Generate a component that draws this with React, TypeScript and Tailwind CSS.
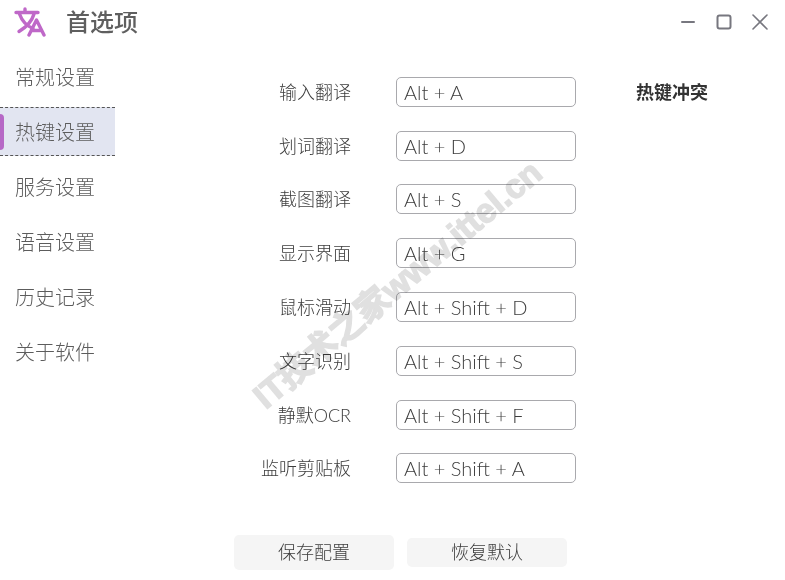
import * as React from 'react';

const menu = ['常规设置', '热键设置', '服务设置', '语音设置', '历史记录', '关于软件'];

const hotkeys = [
	['输入翻译', 'Alt + A'],
	['划词翻译', 'Alt + D'],
	['截图翻译', 'Alt + S'],
	['显示界面', 'Alt + G'],
	['鼠标滑动', 'Alt + Shift + D'],
	['文字识别', 'Alt + Shift + S'],
	['静默OCR', 'Alt + Shift + F'],
	['监听剪贴板', 'Alt + Shift + A'],
];

const App: React.FC = () => {
	return (
		<div className="relative flex h-[580px] w-[785px] flex-col overflow-hidden bg-white font-['Lato','Noto_Sans_CJK_SC',sans-serif] text-[#3c3c3c]">
			<header className="flex h-[47px] items-center pb-[4px] pl-[14px] pr-[17px]">
				<svg width="32" height="30" viewBox="0 0 32 30" fill="none" stroke="#bf68c8" strokeWidth="3.4" strokeLinecap="round" strokeLinejoin="round">
					<path d="M2 5.5H24M11 2V5.5M5.5 7C8 14 13 19 19 21.5M20 7C18 14 12.5 20 5 24.5" />
					<path d="M15 28L22.5 13L30 28M18.5 23.5H26.5" />
				</svg>
				<h1 className="ml-[20px] text-[24px] font-medium text-[#5f5f5f]">首选项</h1>
				<div className="ml-auto flex items-center gap-[20px]">
					<svg width="16" height="16" viewBox="0 0 16 16" fill="none" stroke="#77777f" strokeWidth="2" strokeLinecap="round">
						<path d="M2 8H14" />
					</svg>
					<svg width="16" height="16" viewBox="0 0 16 16" fill="none" stroke="#77777f" strokeWidth="2">
						<rect x="1.5" y="1.5" width="13" height="13" rx="2" />
					</svg>
					<svg width="16" height="16" viewBox="0 0 16 16" fill="none" stroke="#77777f" strokeWidth="1.6" strokeLinecap="round">
						<path d="M1 1L15 15M15 1L1 15" />
					</svg>
				</div>
			</header>

			<div className="flex flex-1">
				<nav className="flex w-[115px] shrink-0 flex-col pt-[2px] text-[20px] font-light text-[#5c5c5c]">
					{menu.map((item) =>
						item === '热键设置' ? (
							<div key={item} className="my-[3px] flex h-[49px] items-center border-y border-dashed border-[#555] bg-[#e2e5f1]">
								<span className="h-[36px] w-1 rounded-r-sm bg-[#b668c6]" />
								<span className="ml-[11px] leading-none">{item}</span>
							</div>
						) : (
							<div key={item} className="flex h-[55px] items-center pl-[15px]">
								{item}
							</div>
						),
					)}
				</nav>

				<main className="flex flex-1 flex-col">
					<div className="flex items-start">
						<div className="flex w-[461px] flex-col pt-[18px]">
							{hotkeys.map(([label, key]) => (
								<div key={label} className="flex h-[53.8px] shrink-0 items-center">
									<span className="w-[236px] pt-[1px] text-right text-[18px] font-light">{label}</span>
									<div className="ml-[45px] flex h-[30px] w-[180px] items-center rounded-[5px] border border-[#a9a9ad] pl-[7px] text-[20px] font-light">
										{key}
									</div>
								</div>
							))}
						</div>
						<span className="ml-[60px] mt-[32px] text-[18px] font-bold text-[#333]">热键冲突</span>
					</div>
					<div className="mt-[40px] flex items-center gap-[13px] pl-[119px] text-[18px] font-light">
						<button className="h-[35px] w-[160px] rounded-[5px] bg-[#f5f5f5]">保存配置</button>
						<button className="h-[29px] w-[160px] rounded-[5px] bg-[#f5f5f5]">恢复默认</button>
					</div>
				</main>
			</div>

			<div className="pointer-events-none absolute left-[216px] top-[268px] w-[360px] -rotate-[40deg] whitespace-nowrap text-center font-['Liberation_Sans','Noto_Sans_CJK_SC',sans-serif] text-[34px] font-bold leading-none text-[#e0e0e0] mix-blend-multiply [-webkit-text-stroke:1.5px_#e0e0e0]">
				IT技术之家www.ittel.cn
			</div>
		</div>
	);
};

export default App;
